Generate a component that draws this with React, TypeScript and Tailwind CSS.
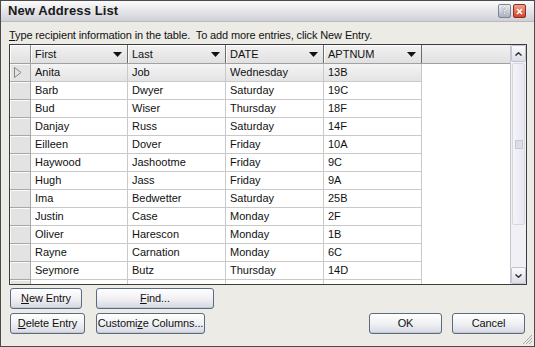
import type { ReactNode } from "react";

type Entry = {
  first: string;
  last: string;
  date: string;
  apt: string;
};

const entries: Entry[] = [
  { first: "Anita", last: "Job", date: "Wednesday", apt: "13B" },
  { first: "Barb", last: "Dwyer", date: "Saturday", apt: "19C" },
  { first: "Bud", last: "Wiser", date: "Thursday", apt: "18F" },
  { first: "Danjay", last: "Russ", date: "Saturday", apt: "14F" },
  { first: "Eilleen", last: "Dover", date: "Friday", apt: "10A" },
  { first: "Haywood", last: "Jashootme", date: "Friday", apt: "9C" },
  { first: "Hugh", last: "Jass", date: "Friday", apt: "9A" },
  { first: "Ima", last: "Bedwetter", date: "Saturday", apt: "25B" },
  { first: "Justin", last: "Case", date: "Monday", apt: "2F" },
  { first: "Oliver", last: "Harescon", date: "Monday", apt: "1B" },
  { first: "Rayne", last: "Carnation", date: "Monday", apt: "6C" },
  { first: "Seymore", last: "Butz", date: "Thursday", apt: "14D" },
  { first: "Sal", last: "Sibley", date: "Monday", apt: "14E" },
];

const columns = [
  { label: "First", width: "w-[97px]" },
  { label: "Last", width: "w-[98px]" },
  { label: "DATE", width: "w-[98px]" },
  { label: "APTNUM", width: "w-[98px]" },
];

function DropArrow() {
  return (
    <svg width="9" height="5" viewBox="0 0 9 5" className="shrink-0">
      <path d="M0 0h9L4.5 5z" fill="#111" />
    </svg>
  );
}

function Button({ children, className }: { children: ReactNode; className: string }) {
  return (
    <button
      className={`flex h-[21px] items-center justify-center whitespace-nowrap rounded-[3px] border border-[#5a6a80] bg-gradient-to-b from-[#ffffff] via-[#f1f1f4] to-[#d6d9e2] text-[11px] leading-[13px] tracking-[-0.1px] text-[#111] shadow-[inset_0_-1px_0_#c3c8d4] ${className}`}
    >
      {children}
    </button>
  );
}

function Cell({ children, width, last }: { children?: ReactNode; width: string; last?: boolean }) {
  return (
    <div
      className={`${width} flex h-full shrink-0 items-center overflow-hidden whitespace-nowrap px-[4px] ${
        last ? "" : "border-r border-[#c9c9c9]"
      }`}
    >
      {children}
    </div>
  );
}

export default function App() {
  return (
    <div className="flex h-[347px] w-[535px] flex-col border border-[#4b4b4b] bg-[#ecebe6] font-['Liberation_Sans',Arial,sans-serif] text-[11px] text-[#111]">
      {/* title bar */}
      <div className="flex h-[21px] shrink-0 items-center justify-between border-b border-[#b8b8c0] bg-gradient-to-b from-[#fbfbfc] via-[#e6e6ea] to-[#cfcfd6] pl-[7px] pr-[8px]">
        <span className="text-[13px] font-bold tracking-[0.1px] text-[#1a1a1a]">New Address List</span>
        <div className="flex items-center gap-[2px]">
          <div className="flex h-[14px] w-[13px] items-center justify-center rounded-[2px] border border-[#7c8494] bg-gradient-to-b from-[#f2f3f7] to-[#aab0c0] text-[10px] font-bold leading-none text-white [text-shadow:0_0_1px_#333]">
            ?
          </div>
          <div className="flex h-[14px] w-[13px] items-center justify-center rounded-[2px] border border-[#8c3020] bg-gradient-to-b from-[#f0a08c] to-[#d2422a]">
            <svg width="7" height="7" viewBox="0 0 7 7">
              <path d="M1 1l5 5M6 1L1 6" stroke="#fff" strokeWidth="1.6" />
            </svg>
          </div>
        </div>
      </div>

      <div className="flex flex-1 flex-col px-[8px]">
        <div className="h-[22px] shrink-0 whitespace-nowrap pt-[6px] leading-[14px] tracking-[-0.12px]">
          <span className="underline">T</span>ype recipient information in the table.&nbsp; To add more entries, click New Entry.
        </div>

        {/* grid */}
        <div className="flex h-[241px] w-[518px] shrink-0 border border-[#3c3c3c] bg-white">
          <div className="flex flex-1 flex-col overflow-hidden">
            <div className="flex h-[19px] shrink-0 border-b border-[#a0a0a0] bg-gradient-to-b from-[#f2f2f2] to-[#e0e0e0]">
              <div className="h-full w-[21px] shrink-0 border-r border-[#8c8c8c] shadow-[inset_1px_1px_0_#fff]" />
              {columns.map((c) => (
                <div
                  key={c.label}
                  className={`${c.width} flex h-full shrink-0 items-center justify-between border-r border-[#6c6c6c] pl-[4px] pr-[5px] shadow-[inset_1px_1px_0_#fff]`}
                >
                  <span>{c.label}</span>
                  <DropArrow />
                </div>
              ))}
              <div className="h-full flex-1" />
            </div>
            {entries.map((e, i) => (
              <div key={e.first} className="flex h-[18px] shrink-0">
                <div className="flex h-full w-[21px] shrink-0 items-center border-b border-r border-[#a8a8a8] bg-[#e3e3e3] pl-[4px] shadow-[inset_1px_1px_0_#fafafa]">
                  {i === 0 && (
                    <svg width="8" height="11" viewBox="0 0 8 11">
                      <path d="M0.5 0.5L7 5.5L0.5 10.5z" fill="none" stroke="#888" />
                    </svg>
                  )}
                </div>
                <div
                  className={`flex h-full shrink-0 border-b border-r border-[#c9c9c9] ${
                    i === 0 ? "bg-gradient-to-b from-[#f4f4f4] to-[#e4e4e4]" : ""
                  }`}
                >
                  <Cell width="w-[97px]">{e.first}</Cell>
                  <Cell width="w-[98px]">{e.last}</Cell>
                  <Cell width="w-[98px]">{e.date}</Cell>
                  <Cell width="w-[97px]" last>
                    {e.apt}
                  </Cell>
                </div>
                <div className="h-full flex-1" />
              </div>
            ))}
          </div>

          {/* scrollbar */}
          <div className="flex w-[16px] shrink-0 flex-col border-l border-[#c8c8d0] bg-[#f1f1f5]">
            <div className="flex h-[17px] shrink-0 items-center justify-center rounded-[2px] border border-[#c0c4d0] bg-gradient-to-b from-[#fbfbfd] to-[#dcdde6]">
              <svg width="7" height="4" viewBox="0 0 7 4">
                <path d="M0.5 3.5L3.5 0.8L6.5 3.5" fill="none" stroke="#333" strokeWidth="1.5" />
              </svg>
            </div>
            <div className="flex flex-1 flex-col py-[1px]">
              <div className="mx-[1px] flex h-[162px] items-center justify-center rounded-[2px] border border-[#d6d7e0] bg-gradient-to-r from-[#f4f4f8] to-[#e6e7ef]">
                <div className="h-[9px] w-[8px] border border-[#c6c7d1] bg-[#dcdde5]" />
              </div>
            </div>
            <div className="flex h-[17px] shrink-0 items-center justify-center rounded-[2px] border border-[#c0c4d0] bg-gradient-to-b from-[#fbfbfd] to-[#dcdde6]">
              <svg width="7" height="4" viewBox="0 0 7 4">
                <path d="M0.5 0.5L3.5 3.2L6.5 0.5" fill="none" stroke="#333" strokeWidth="1.5" />
              </svg>
            </div>
          </div>
        </div>

        {/* buttons */}
        <div className="mt-[3px] flex gap-[14px] pl-[1px]">
          <Button className="w-[72px]">
            <span>
              <span className="underline">N</span>ew Entry
            </span>
          </Button>
          <Button className="w-[118px]">
            <span>
              <span className="underline">F</span>ind...
            </span>
          </Button>
        </div>
        <div className="mt-[4px] flex items-center pl-[1px] pr-[1px]">
          <Button className="w-[75px]">
            <span>
              <span className="underline">D</span>elete Entry
            </span>
          </Button>
          <Button className="ml-[11px] w-[109px]">
            <span>
              Customi<span className="underline">z</span>e Columns...
            </span>
          </Button>
          <div className="flex-1" />
          <Button className="w-[73px]">OK</Button>
          <Button className="ml-[10px] w-[73px]">Cancel</Button>
        </div>
        <div className="flex flex-1 items-end justify-end pb-[1px]">
          <svg width="11" height="11" viewBox="0 0 11 11" className="-mr-[7px]">
            <path d="M10 1L1 10M10 4L4 10M10 7L7 10" stroke="#a8a8a8" strokeWidth="1" />
          </svg>
        </div>
      </div>
    </div>
  );
}
